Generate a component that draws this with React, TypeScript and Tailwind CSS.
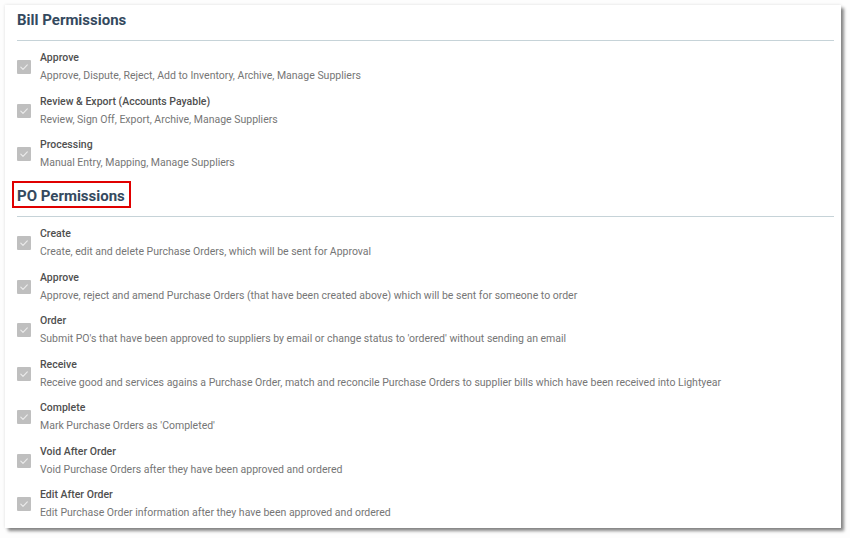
import React from "react";

type Perm = { title: string; desc: string };

const billPerms: Perm[] = [
  {
    title: "Approve",
    desc: "Approve, Dispute, Reject, Add to Inventory, Archive, Manage Suppliers",
  },
  {
    title: "Review & Export (Accounts Payable)",
    desc: "Review, Sign Off, Export, Archive, Manage Suppliers",
  },
  { title: "Processing", desc: "Manual Entry, Mapping, Manage Suppliers" },
];

const poPerms: Perm[] = [
  {
    title: "Create",
    desc: "Create, edit and delete Purchase Orders, which will be sent for Approval",
  },
  {
    title: "Approve",
    desc: "Approve, reject and amend Purchase Orders (that have been created above) which will be sent for someone to order",
  },
  {
    title: "Order",
    desc: "Submit PO's that have been approved to suppliers by email or change status to 'ordered' without sending an email",
  },
  {
    title: "Receive",
    desc: "Receive good and services agains a Purchase Order, match and reconcile Purchase Orders to supplier bills which have been received into Lightyear",
  },
  { title: "Complete", desc: "Mark Purchase Orders as 'Completed'" },
  {
    title: "Void After Order",
    desc: "Void Purchase Orders after they have been approved and ordered",
  },
  {
    title: "Edit After Order",
    desc: "Edit Purchase Order information after they have been approved and ordered",
  },
];

function CheckBox() {
  return (
    <span className="flex h-[14px] w-[14px] shrink-0 items-center justify-center rounded-[1px] bg-[#bfbfbf]">
      <svg width="10" height="10" viewBox="0 0 10 10" fill="none">
        <path
          d="M1.8 5.2 L4 7.3 L8.3 2.8"
          stroke="#ececec"
          strokeWidth="1.1"
          strokeLinecap="round"
          strokeLinejoin="round"
        />
      </svg>
    </span>
  );
}

function PermRow({ p }: { p: Perm }) {
  return (
    <div className="flex h-[43.5px] items-start">
      <div className="flex h-[36px] items-center pr-[9px]">
        <CheckBox />
      </div>
      <div>
        <div className="text-[10.5px] font-medium leading-[18px] text-[#4f4f4f]">
          {p.title}
        </div>
        <div className="text-[10.5px] leading-[18px] text-[#767676]">
          {p.desc}
        </div>
      </div>
    </div>
  );
}

function Section({
  title,
  perms,
  boxed,
}: {
  title: string;
  perms: Perm[];
  boxed?: boolean;
}) {
  return (
    <section>
      <div className="relative">
        <h2 className="text-[15px] font-bold leading-[20px] text-[#34495e]">
          {title}
        </h2>
        {boxed && (
          <span className="pointer-events-none absolute -left-[5px] -top-[5px] h-[27px] w-[119px] border-2 border-[#e00000]" />
        )}
      </div>
      {/* divider */}
      <div className="mt-[10px] h-px bg-[#c6d3d8]" />
      <div className="pt-[8px]">
        {perms.map((p) => (
          <PermRow key={p.title} p={p} />
        ))}
      </div>
    </section>
  );
}

export default function App() {
  return (
    <div
      className="h-[538px] w-[850px] bg-[#fdfdfd] pl-[5px] pt-[5px]"
      style={{ fontFamily: "Roboto, 'Liberation Sans', sans-serif" }}
    >
      <div className="h-[523px] w-[836px] bg-white pl-[12px] pr-[7px] pt-[5px] shadow-[0_0_3px_rgba(0,0,0,0.12),3px_3px_3px_rgba(0,0,0,0.45)]">
        <Section title="Bill Permissions" perms={billPerms} />
        <div className="pt-[6.5px]">
          <Section title="PO Permissions" perms={poPerms} boxed />
        </div>
      </div>
    </div>
  );
}
